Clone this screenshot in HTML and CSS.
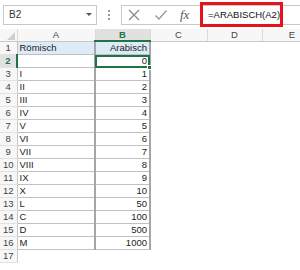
FILE: index.html
```html
<!DOCTYPE html>
<html lang="de">
  <head>
    <meta charset="UTF-8" />
    <title>ARABISCH</title>
    <link rel="stylesheet" href="styles.css">
  </head>
  <body>
    <div class="topbar">
      <div class="namebox">
        <span>B2</span>
        <span class="arrow"></span>
      </div>
      <div class="dots"><i></i><i></i><i></i></div>
      <div class="fbar">
        <svg class="icon" width="14" height="14" viewBox="0 0 14 14">
          <path d="M2 2 L12 12 M12 2 L2 12" stroke="#8a8a8a" stroke-width="1.3" fill="none" />
        </svg>
        <svg class="icon" width="14" height="14" viewBox="0 0 14 14">
          <path d="M1.5 7.5 L5 11 L12.5 2.5" stroke="#9a9a9a" stroke-width="1.4" fill="none" />
        </svg>
        <span class="fx">fx</span>
        <span class="formula">=ARABISCH(A2)</span>
      </div>
    </div>

    <table class="sheet">
      <colgroup>
        <col class="c-row" />
        <col class="c-a" />
        <col class="c-b" />
        <col class="c-c" />
        <col class="c-d" />
        <col class="c-e" />
      </colgroup>
      <thead>
        <tr>
          <th class="corner"><span class="tri"></span></th>
          <th>A</th>
          <th class="sel">B</th>
          <th>C</th>
          <th>D</th>
          <th>E</th>
        </tr>
      </thead>
      <tbody id="rows"></tbody>
    </table>

    <script>
      const data = [
        ["Römisch", "Arabisch"],
        ["", "0"],
        ["I", "1"],
        ["II", "2"],
        ["III", "3"],
        ["IV", "4"],
        ["V", "5"],
        ["VI", "6"],
        ["VII", "7"],
        ["VIII", "8"],
        ["IX", "9"],
        ["X", "10"],
        ["L", "50"],
        ["C", "100"],
        ["D", "500"],
        ["M", "1000"],
        ["", ""]
      ];
      const rows = document.querySelector("#rows");

      data.forEach((row, i) => {
        const tr = document.createElement("tr");
        const n = i + 1;
        const inTable = n <= 16;
        let html = `<td class="num${n === 2 ? " sel" : ""}">${n}</td>`;
        html += `<td class="${inTable ? "cell a" : ""}${n === 1 ? " head" : ""}">${row[0]}</td>`;
        html += `<td class="${inTable ? "cell b" : ""}${n === 1 ? " head" : ""}${n === 2 ? " active" : ""}">${row[1]}${n === 2 ? '<span class="handle"></span>' : ""}</td>`;
        html += "<td></td><td></td><td></td>";
        tr.innerHTML = html;
        rows.append(tr);
      });
    </script>
  </body>
</html>
```

FILE: styles.css
```css
* {
  padding: 0;
  margin: 0;
  box-sizing: border-box;
}

body {
  width: 300px;
  height: 270px;
  overflow: hidden;
  background: white;
  font-family: "Liberation Sans", Arial, sans-serif;
  font-size: 9.5px;
  color: #222;
}

.topbar {
  height: 29px;
  display: flex;
  align-items: center;
  padding-left: 3px;
}

.namebox {
  width: 94px;
  height: 20px;
  border: 1px solid #c8c8c8;
  display: flex;
  align-items: center;
  justify-content: space-between;
  padding: 0 4px 0 5px;
  font-size: 10px;
  color: #333;
}

.arrow {
  width: 0;
  height: 0;
  border-left: 3px solid transparent;
  border-right: 3px solid transparent;
  border-top: 3px solid #555;
}

.dots {
  width: 24px;
  display: flex;
  flex-direction: column;
  align-items: center;
  gap: 2px;
}

.dots i {
  width: 2px;
  height: 2px;
  background: #999;
}

.fbar {
  flex: 1;
  height: 20px;
  border: 1px solid #c8c8c8;
  border-right: none;
  display: flex;
  align-items: center;
  padding-left: 5px;
}

.icon {
  margin-right: 13px;
}

.icon + .icon {
  margin-right: 12px;
}

.fx {
  font-family: "Liberation Serif", serif;
  font-style: italic;
  font-size: 13px;
  color: #555;
  width: 20px;
}

.formula {
  height: 25px;
  width: 83px;
  border: 3px solid #e8121b;
  display: flex;
  align-items: center;
  padding-left: 5px;
  font-size: 9.5px;
  color: #111;
}

.sheet {
  table-layout: fixed;
  border-collapse: collapse;
  width: 322px;
}

.c-row { width: 17px; }
.c-a { width: 78px; }
.c-b { width: 55px; }
.c-c { width: 57px; }
.c-d { width: 55px; }
.c-e { width: 60px; }

th {
  height: 12px;
  font-weight: normal;
  color: #444;
  background: #f7f7f7;
  border-right: 1px solid #dadada;
  border-bottom: 1px solid #c8c8c8;
  line-height: 11px;
  padding: 0;
}

th.sel {
  background: #e1e1e1;
  color: #217346;
  font-weight: bold;
  border-bottom: 2px solid #217346;
}

.corner {
  position: relative;
}

.tri {
  position: absolute;
  right: 2px;
  bottom: 1px;
  width: 0;
  height: 0;
  border-left: 8px solid transparent;
  border-bottom: 8px solid #d0d0d0;
}

td {
  height: 13px;
  padding: 0 2px;
  line-height: 12px;
  white-space: nowrap;
}

td.num {
  background: #f7f7f7;
  color: #444;
  text-align: center;
  border-right: 1px solid #c8c8c8;
  border-bottom: 1px solid #e2e2e2;
  padding: 0;
  font-size: 9.5px;
}

td.num.sel {
  background: #e1e1e1;
  color: #217346;
  font-weight: bold;
  border-right: 2px solid #217346;
}

.cell {
  border-bottom: 1px solid #c0c0c0;
  border-right: 2px solid #a6a6a6;
}

.cell.b {
  text-align: right;
}

.cell.head {
  background: #ddebf7;
}

.cell.active {
  position: relative;
  outline: 2px solid #217346;
  outline-offset: -2px;
}

.handle {
  position: absolute;
  right: -3px;
  bottom: -3px;
  width: 5px;
  height: 5px;
  background: #217346;
  border: 1px solid white;
}
```
